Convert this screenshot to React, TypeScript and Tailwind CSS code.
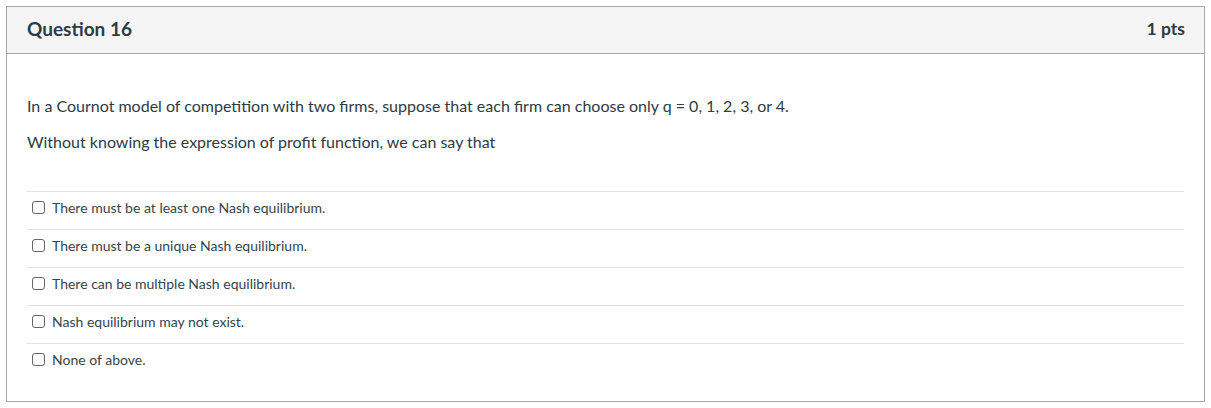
const answers = [
  "There must be at least one Nash equilibrium.",
  "There must be a unique Nash equilibrium.",
  "There can be multiple Nash equilibrium.",
  "Nash equilibrium may not exist.",
  "None of above.",
];

export default function App() {
  return (
    <div className="min-h-screen bg-white p-[6px] font-['Lato','Liberation_Sans',sans-serif] text-[#2d3b45]">
      <div className="border border-[#a8a8a8]">
        {/* Header */}
        <div className="flex h-[47px] items-center justify-between border-b border-[#a8a8a8] bg-[#f5f5f5] pb-[2px] pl-5 pr-[19px]">
          <h2 className="text-[19px] font-bold">Question 16</h2>
          <span className="text-[17.5px] font-bold">1 pts</span>
        </div>

        {/* Body */}
        <div className="px-5 pt-[42px] pb-5">
          <p className="text-[16px] leading-[20px]">
            In a Cournot model of competition with two firms, suppose that each firm can choose only q = 0, 1, 2, 3, or 4.
          </p>
          <p className="mt-[16px] text-[16px] leading-[20px]">
            Without knowing the expression of profit function, we can say that
          </p>

          <div className="mt-[39px]">
            {answers.map((a, i) => (
              <label
                key={i}
                className="flex h-[38px] items-center gap-[7px] border-t border-[#e2e2e2] pb-[6px] pl-[5px] text-[14px] text-[#34444f]"
              >
                <span className="h-[13px] w-[13px] rounded-[3px] border border-[#666]" />
                <span>{a}</span>
              </label>
            ))}
          </div>
        </div>
      </div>
    </div>
  );
}
